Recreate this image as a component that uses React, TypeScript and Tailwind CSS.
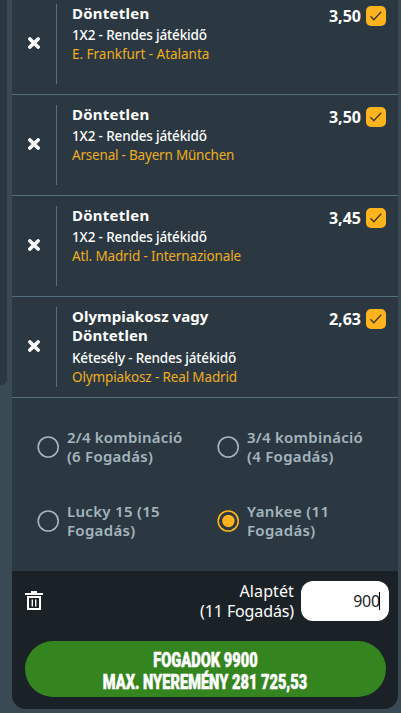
import { useState } from 'react';

interface Bet {
  id: number;
  pick: string;
  pickClass: string;
  market: string;
  marketClass: string;
  match: string;
  matchClass: string;
  odds: string;
}

interface System {
  id: string;
  lines: string[];
  lineClasses: string[];
}

const bets: Bet[] = [
  {
    id: 1,
    pick: 'Döntetlen',
    pickClass: 'tracking-[0.25px]',
    market: '1X2 - Rendes játékidő',
    marketClass: 'mt-[3px] tracking-[-0.15px]',
    match: 'E. Frankfurt - Atalanta',
    matchClass: 'tracking-[-0.02px]',
    odds: '3,50',
  },
  {
    id: 2,
    pick: 'Döntetlen',
    pickClass: 'tracking-[0.25px]',
    market: '1X2 - Rendes játékidő',
    marketClass: 'mt-[3px] tracking-[-0.15px]',
    match: 'Arsenal - Bayern München',
    matchClass: 'tracking-[-0.2px]',
    odds: '3,50',
  },
  {
    id: 3,
    pick: 'Döntetlen',
    pickClass: 'tracking-[0.25px]',
    market: '1X2 - Rendes játékidő',
    marketClass: 'mt-[3px] tracking-[-0.15px]',
    match: 'Atl. Madrid - Internazionale',
    matchClass: 'tracking-[-0.14px]',
    odds: '3,45',
  },
  {
    id: 4,
    pick: 'Olympiakosz vagy Döntetlen',
    pickClass: 'tracking-[0.05px]',
    market: 'Kétesély - Rendes játékidő',
    marketClass: 'mt-1 tracking-[-0.18px]',
    match: 'Olympiakosz - Real Madrid',
    matchClass: 'tracking-[-0.14px]',
    odds: '2,63',
  },
];

const systems: System[] = [
  { id: '2/4', lines: ['2/4 kombináció', '(6 Fogadás)'], lineClasses: ['tracking-[0.2px]', 'tracking-[0.25px]'] },
  { id: '3/4', lines: ['3/4 kombináció', '(4 Fogadás)'], lineClasses: ['tracking-[0.25px]', 'tracking-[0.3px]'] },
  { id: 'lucky15', lines: ['Lucky 15 (15', 'Fogadás)'], lineClasses: ['tracking-[0.3px]', 'tracking-[0.3px]'] },
  { id: 'yankee', lines: ['Yankee (11', 'Fogadás)'], lineClasses: ['tracking-[0.35px]', 'tracking-[0.3px]'] },
];

function BetRow({ bet }: { bet: Bet }) {
  return (
    <div className="flex h-[101px] shrink-0 border-b border-[#53707f] py-2.5">
      <button className="flex w-11 items-center justify-center">
        <svg width="12" height="12" viewBox="0 0 12 12" className="mb-[3px]">
          <path d="M1.9 1.9 10.1 10.1M10.1 1.9 1.9 10.1" stroke="#fff" strokeWidth="3.6" strokeLinecap="round" />
        </svg>
      </button>
      <div className="w-px bg-[#53707f]" />
      <div className="ml-[15px] w-[180px] whitespace-nowrap">
        <div className={`w-[150px] whitespace-normal text-[15px] leading-[19px] font-bold text-white ${bet.pickClass}`}>
          {bet.pick}
        </div>
        <div className={`text-[13.5px] leading-[19px] font-medium text-white ${bet.marketClass}`}>{bet.market}</div>
        <div className={`text-[13.5px] leading-[19px] text-[#eeae20] ${bet.matchClass}`}>{bet.match}</div>
      </div>
      <div className="mt-0.5 mr-3 ml-auto flex h-5 items-center gap-[5px]">
        <span className="text-base leading-5 font-bold text-white">{bet.odds}</span>
        <span className="flex size-5 items-center justify-center rounded-[5px] bg-[#ffb41d]">
          <svg width="14" height="12" viewBox="0 0 14 12" fill="none">
            <path d="M1.5 6.3 4.8 9.8 12.2 1.8" stroke="#3a3520" strokeWidth="1.3" />
          </svg>
        </span>
      </div>
    </div>
  );
}

export default function App() {
  const [selected, setSelected] = useState('yankee');
  const [stake, setStake] = useState('900');

  return (
    <div className="flex h-[713px] w-[401px] overflow-hidden bg-[#3a4a54] font-['Noto_Sans',sans-serif]">
      <div className="h-[385px] w-[7px] shrink-0 rounded-br-md bg-[#2b3841]" />

      <div className="ml-[5px] flex h-[709px] w-[386px] shrink-0 flex-col overflow-hidden rounded-b-[14px] bg-[#2b3841]">
        {/* Selections */}
        <div className="flex h-[398px] shrink-0 flex-col justify-end overflow-hidden">
          {bets.map((bet) => (
            <BetRow key={bet.id} bet={bet} />
          ))}
        </div>

        {/* System types */}
        <div className="grid h-[173px] shrink-0 grid-cols-[180px_1fr] grid-rows-[74px_74px] pt-3 pl-[25px]">
          {systems.map((system) => (
            <button
              key={system.id}
              onClick={() => setSelected(system.id)}
              className="flex items-center gap-2 text-left"
            >
              <svg width="22" height="22" viewBox="0 0 22 22" fill="none" className="shrink-0">
                <circle cx="11.2" cy="11" r="10" stroke={selected === system.id ? '#ffb41d' : '#a5b5be'} strokeWidth="1.6" />
                {selected === system.id && <circle cx="11.4" cy="11" r="6.2" fill="#ffb41d" />}
              </svg>
              <span className="flex flex-col items-start text-[15px] leading-[19px] font-semibold whitespace-nowrap text-[#a5b5be]">
                {system.lines.map((line, i) => (
                  <span key={line} className={system.lineClasses[i]}>
                    {line}
                  </span>
                ))}
              </span>
            </button>
          ))}
        </div>

        {/* Stake and submit */}
        <div className="flex-1 bg-[#1a2227] pt-2.5 pr-[9px] pl-[13px]">
          <div className="flex h-10 items-center">
            <button>
              <svg width="18" height="20" viewBox="0 0 18 20" fill="none">
                <path d="M0 3h18M6 1h6" stroke="#fff" strokeWidth="2" />
                <path d="M3 6h12v12H3z" stroke="#fff" strokeWidth="2" />
                <path d="M7.3 8.5v7M10.7 8.5v7" stroke="#fff" strokeWidth="1.4" />
              </svg>
            </button>
            <div className="ml-auto flex flex-col items-end text-base leading-5 text-white">
              <span className="tracking-[0.1px]">Alaptét</span>
              <span className="tracking-[-0.12px]">(11 Fogadás)</span>
            </div>
            <div className="relative ml-[7px] h-10 w-[88px]">
              <input
                value={stake}
                onChange={(e) => setStake(e.target.value)}
                className="h-10 w-full rounded-xl bg-white pr-[9px] text-right text-base tracking-[-0.2px] text-[#1a2227] outline-none"
              />
              <span className="absolute top-[11px] right-[9px] h-[18px] w-px bg-black" />
            </div>
          </div>
          <button className="mt-5 flex h-14 w-[361px] flex-col items-center justify-center rounded-full bg-[#34841f] pt-[3px] text-[20px] leading-[22px] font-black whitespace-nowrap text-white [-webkit-text-stroke:0.5px_white]">
            <span className="scale-x-[0.73] font-[Roboto,sans-serif]">FOGADOK 9900</span>
            <span className="scale-x-[0.73] font-[Roboto,sans-serif]">MAX. NYEREMÉNY 281 725,53</span>
          </button>
        </div>
      </div>
    </div>
  );
}
